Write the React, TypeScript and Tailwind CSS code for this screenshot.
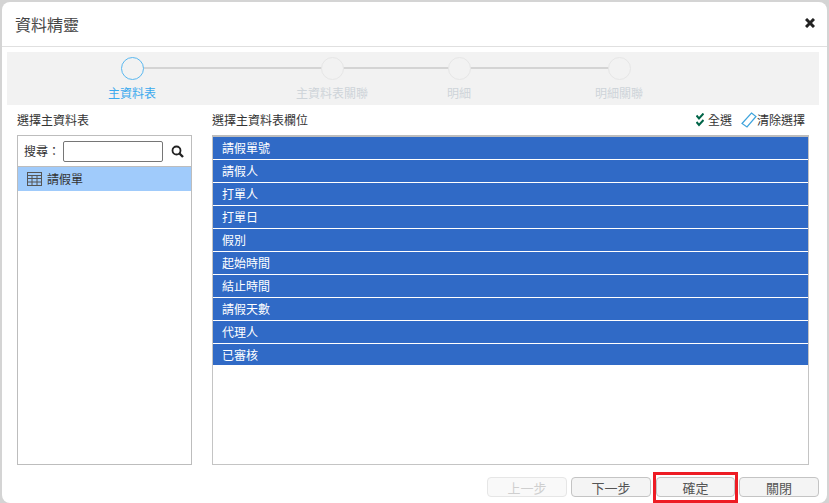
import React from "react";

const steps = [
  { label: "主資料表", active: true },
  { label: "主資料表關聯", active: false },
  { label: "明細", active: false },
  { label: "明細關聯", active: false },
];

const fields = [
  "請假單號",
  "請假人",
  "打單人",
  "打單日",
  "假別",
  "起始時間",
  "結止時間",
  "請假天數",
  "代理人",
  "已審核",
];

const TableIcon = () => (
  <svg width="15" height="14" viewBox="0 0 15 14" fill="none" stroke="#555" strokeWidth="1">
    <rect x="0.5" y="0.5" width="14" height="13" />
    <path d="M0.5 3.5H14.5M0.5 6.5H14.5M0.5 10H14.5M5 3.5V13.5M10 3.5V13.5" />
  </svg>
);

const SearchIcon = () => (
  <svg width="13" height="13" viewBox="0 0 13 13" fill="none" stroke="#222">
    <circle cx="5.5" cy="5.5" r="4" strokeWidth="1.8" />
    <path d="M8.5 8.5L12 12" strokeWidth="2.4" />
  </svg>
);

const CloseIcon = () => (
  <svg width="10" height="10" viewBox="0 0 10 10" fill="none" stroke="#222" strokeWidth="3">
    <path d="M1 1L9 9M9 1L1 9" />
  </svg>
);

const DoubleCheckIcon = () => (
  <svg width="8" height="14" viewBox="0 0 8 14" fill="none" stroke="#006548" strokeWidth="2">
    <path d="M0.5 2.5L3 5.5L7.5 0.5M0.5 9L3 12L7.5 7" />
  </svg>
);

const EraserIcon = () => (
  <svg width="16" height="16" viewBox="0 0 16 16" fill="none" stroke="#3fa4dc" strokeWidth="1.2">
    <path d="M10.5 1L15 4.5L6 15L1 11.5Z" />
  </svg>
);

function StepItem({ label, active }: { label: string; active: boolean }) {
  return (
    <div className="flex flex-col items-center">
      <div
        className={
          active
            ? "h-[23px] w-[23px] rounded-full border border-[#5ab8f0] bg-[#f2f2f2]"
            : "h-[23px] w-[23px] rounded-full border border-[#e6e6e6] bg-[#f2f2f2]"
        }
      />
      <span
        className={
          active
            ? "mt-[4px] whitespace-nowrap leading-[18px] text-[#3aa9ee]"
            : "mt-[4px] whitespace-nowrap leading-[18px] text-[#ced4d9]"
        }
      >
        {label}
      </span>
    </div>
  );
}

export default function App() {
  return (
    <div
      className="h-[503px] w-[829px] overflow-hidden bg-[#d4d4d4] pl-[2px] pr-[2px] pt-[2px] text-[12px] text-[#333]"
      style={{ fontFamily: '"Noto Sans CJK TC", "Noto Sans", sans-serif' }}
    >
      <div className="relative flex h-[501px] flex-col rounded-[8px] bg-white">
        {/* Header */}
        <div className="flex h-[45px] shrink-0 items-center justify-between border-b border-[#e0e0e0] pl-[13px] pr-[12px]">
          <span className="text-[16px] leading-[22px] text-[#444]">資料精靈</span>
          <span className="-mt-[2px] flex">
            <CloseIcon />
          </span>
        </div>

        {/* Wizard steps */}
        <div className="relative ml-[5px] mr-[8px] mt-[5px] h-[53px] shrink-0 bg-[#f2f2f2]">
          <div className="absolute left-[125px] top-[15px] h-[2px] w-[487px] bg-[#d4d4d4]" />
          <div className="absolute left-0 top-[5px] flex w-full">
            <div className="ml-[101px] w-[48px]">
              <StepItem {...steps[0]} />
            </div>
            <div className="ml-[140px] w-[72px]">
              <StepItem {...steps[1]} />
            </div>
            <div className="ml-[79px] w-[24px]">
              <StepItem {...steps[2]} />
            </div>
            <div className="ml-[124px] w-[48px]">
              <StepItem {...steps[3]} />
            </div>
          </div>
        </div>

        {/* Body */}
        <div className="flex min-h-0 flex-1 gap-[20px] pl-[15px] pr-[18px] pt-[4px]">
          <div className="flex w-[175px] shrink-0 flex-col">
            <div className="flex h-[26px] items-start leading-[22px]">選擇主資料表</div>
            <div className="h-[330px] border border-[#bdbdbd]">
              <div className="flex h-[31px] items-center gap-[4px] border-b border-[#bdbdbd] pl-[6px]">
                <span>搜尋：</span>
                <input className="-ml-[1px] h-[21px] w-[100px] rounded-[2px] border border-[#767676] bg-white" />
                <span className="ml-[4px] flex">
                  <SearchIcon />
                </span>
              </div>
              <div className="flex h-[24px] items-center gap-[5px] bg-[#a0cbfb] pl-[9px]">
                <TableIcon />
                <span>請假單</span>
              </div>
            </div>
          </div>

          <div className="flex min-w-0 flex-1 flex-col">
            <div className="flex h-[26px] items-start justify-between pr-[4px] leading-[22px]">
              <span>選擇主資料表欄位</span>
              <div className="flex items-center">
                <span className="flex">
                  <DoubleCheckIcon />
                </span>
                <span className="ml-[4px]">全選</span>
                <span className="ml-[9px] flex">
                  <EraserIcon />
                </span>
                <span>清除選擇</span>
              </div>
            </div>
            <div className="h-[330px] border border-[#c4c4c4] border-t-2 border-t-[#bdbdbd]">
              {fields.map((field) => (
                <div
                  key={field}
                  className="mb-px flex h-[22px] items-center bg-[#306ac6] pl-[9px] text-white last:h-[21px]"
                >
                  {field}
                </div>
              ))}
            </div>
          </div>
        </div>

        {/* Footer */}
        <div className="flex h-[38px] shrink-0 items-start justify-end pr-[8px] pt-[12px] text-[13px]">
          <button className="h-[20px] w-[80px] rounded-[4px] border border-[#e6e6e6] bg-[#f9f9f9] text-[#cfcfcf]">
            上一步
          </button>
          <button className="ml-[4px] h-[20px] w-[80px] rounded-[4px] border border-[#c4c4c4] bg-[#f4f4f4] text-[#555]">
            下一步
          </button>
          <button className="ml-[5px] h-[20px] w-[79px] rounded-[4px] border border-[#c4c4c4] bg-[#f4f4f4] text-[#555]">
            確定
          </button>
          <button className="ml-[4px] h-[20px] w-[80px] rounded-[4px] border border-[#c4c4c4] bg-[#f4f4f4] text-[#555]">
            關閉
          </button>
        </div>

        {/* Annotation around the confirm button */}
        <div className="absolute left-[651px] top-[470px] h-[31px] w-[85px] border-[3px] border-[#ed1c24]" />
      </div>
    </div>
  );
}
